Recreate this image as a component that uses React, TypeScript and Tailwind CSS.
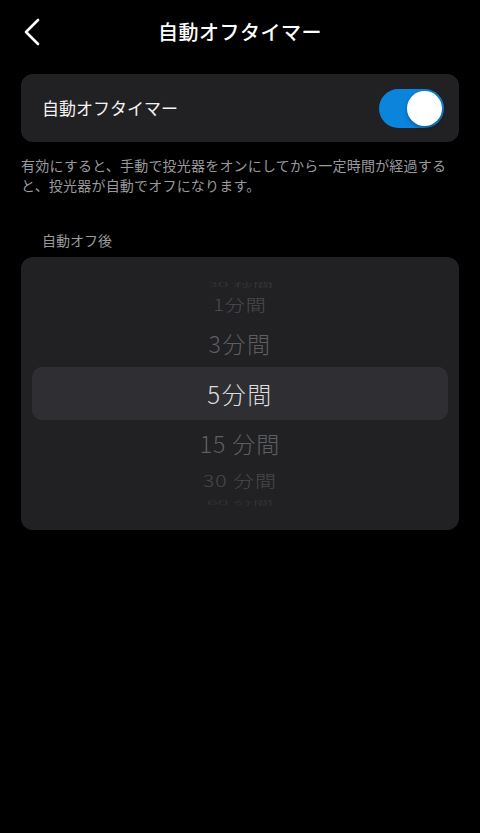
import React from "react";

const font = { fontFamily: '"Noto Sans CJK JP", "Noto Sans", sans-serif' };

export default function App() {
  return (
    <div className="w-[480px] h-[833px] bg-black text-white overflow-hidden" style={font}>
      {/* Header */}
      <div className="h-[64px] flex items-center px-[21px]">
        <div className="w-[60px] flex items-center">
          <svg width="22" height="30" viewBox="0 0 22 30">
            <polyline points="17,3 5,15 17,27" fill="none" stroke="white" strokeWidth="2.6" strokeLinecap="round" strokeLinejoin="round" />
          </svg>
        </div>
        <div className="flex-1 text-center text-[20px] font-medium tracking-[0.5px]">自動オフタイマー</div>
        <div className="w-[60px]" />
      </div>

      <div className="px-[21px] pt-[10px]">
        {/* Toggle card */}
        <div className="h-[68px] rounded-[12px] bg-[#212123] flex items-center justify-between pl-[21px] pr-[15px]">
          <span className="text-[17px] text-[#f2f2f2]">自動オフタイマー</span>
          <div className="w-[65px] h-[39px] rounded-full bg-[#0b84dc] flex items-center justify-end pr-[2px]">
            <div className="w-[35px] h-[35px] rounded-full bg-white shadow-[0_2px_4px_rgba(0,0,0,0.3)]" />
          </div>
        </div>

        <p className="mt-[13px] text-[14px] leading-[20px] text-[#9a9a9e] tracking-[0.2px]">
          有効にすると、手動で投光器をオンにしてから一定時間が経過すると、投光器が自動でオフになります。
        </p>

        <div className="mt-[35px] pl-[21px] text-[14px] text-[#9a9a9e] leading-[20px]">自動オフ後</div>

        {/* Picker */}
        <div className="mt-[7px] h-[273px] rounded-[12px] bg-[#212123] pt-[21px] flex flex-col font-light">
          <div className="h-[14px] flex items-center justify-center text-[20px] text-[#3a3a3d] [transform:scaleY(0.28)]">30 秒間</div>
          <div className="h-[26px] flex items-center justify-center text-[20px] text-[#4c4c50] tracking-[1px] [transform:scaleY(0.78)]">1分間</div>
          <div className="h-[49px] flex items-center justify-center text-[23px] text-[#5e5e62] tracking-[1.5px] pt-[2px]">3分間</div>
          <div className="h-[53px] mx-[11px] rounded-[10px] bg-[#2f2f33] flex items-center justify-center text-[24px] text-[#dcdcde] tracking-[1.5px]">5分間</div>
          <div className="h-[46px] flex items-center justify-center text-[23px] text-[#5e5e62] tracking-[1px]">15 分間</div>
          <div className="h-[30px] flex items-center justify-center text-[21px] text-[#48484b] tracking-[1px] [transform:scaleY(0.78)]">30 分間</div>
          <div className="h-[14px] flex items-center justify-center text-[20px] text-[#36363a] [transform:scaleY(0.3)]">60 分間</div>
        </div>
      </div>
    </div>
  );
}
